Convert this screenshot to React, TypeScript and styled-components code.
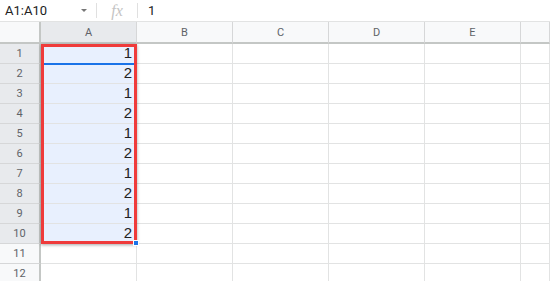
import styled, { createGlobalStyle } from "styled-components";

const GlobalStyle = createGlobalStyle`
  html, body {
    margin: 0;
    padding: 0;
    background: #ffffff;
    font-family: Roboto, "Liberation Sans", Arial, sans-serif;
    overflow: hidden;
  }
`;

//Formula bar along the top
const FormulaBar = styled.div`
  height: 21px;
  display: flex;
  align-items: center;
  border-bottom: 1px solid #e2e3e3;
  color: #222;
  font-size: 13px;
`;

const NameBox = styled.div`
  width: 96px;
  padding-left: 5px;
  box-sizing: border-box;
  display: flex;
  align-items: center;
  justify-content: space-between;
  padding-right: 9px;
`;

const Caret = styled.span`
  width: 0;
  height: 0;
  border-left: 3px solid transparent;
  border-right: 3px solid transparent;
  border-top: 3px solid #777;
`;

const Divider = styled.span`
  width: 1px;
  height: 15px;
  background: #e0e0e0;
`;

const Fx = styled.span`
  width: 40px;
  text-align: center;
  font-family: "Liberation Serif", serif;
  font-style: italic;
  font-size: 16px;
  color: #c4c4c4;
`;

const FormulaValue = styled.span`
  padding-left: 10px;
  color: #202124;
`;

//Grid of cells
const Sheet = styled.div`
  position: relative;
  display: grid;
  grid-template-columns: 41px repeat(5, 96px) 1fr;
  grid-template-rows: 22px;
  grid-auto-rows: 20px;
`;

const Corner = styled.div`
  background: #f8f9fa;
  border-right: 2px solid #c4c7c5;
  border-bottom: 2px solid #c4c7c5;
  box-sizing: border-box;
`;

const ColHead = styled.div<{ $active?: boolean }>`
  box-sizing: border-box;
  background: ${(p) => (p.$active ? "#e8eaed" : "#f8f9fa")};
  border-right: 1px solid #d6d7d8;
  border-bottom: 2px solid #c4c7c5;
  display: flex;
  align-items: center;
  justify-content: center;
  font-size: 11px;
  color: #5f6368;
`;

const RowHead = styled.div<{ $active?: boolean }>`
  box-sizing: border-box;
  background: ${(p) => (p.$active ? "#e8eaed" : "#f8f9fa")};
  border-right: 2px solid #c4c7c5;
  border-bottom: 1px solid #d6d7d8;
  display: flex;
  align-items: center;
  justify-content: center;
  font-size: 11px;
  color: #5f6368;
`;

const Cell = styled.div<{ $selected?: boolean }>`
  box-sizing: border-box;
  background: ${(p) => (p.$selected ? "#e8f0fe" : "#ffffff")};
  border-right: 1px solid #e2e3e3;
  border-bottom: 1px solid #e2e3e3;
  display: flex;
  align-items: flex-end;
  justify-content: flex-end;
  padding: 0 4px 1px 0;
  font-family: "Liberation Sans", Arial, sans-serif;
  font-size: 15px;
  line-height: 18px;
  color: #222;
`;

//Red annotation box drawn over column A
const Highlight = styled.div`
  position: absolute;
  left: 41px;
  top: 22px;
  width: 96px;
  height: 200px;
  box-sizing: border-box;
  border: 3px solid #ef3b3b;
  box-shadow: 0 1px 3px rgba(0, 0, 0, 0.35);
  pointer-events: none;
`;

const ActiveLine = styled.div`
  position: absolute;
  left: 44px;
  top: 41px;
  width: 90px;
  height: 2px;
  background: #1a73e8;
`;

const Handle = styled.div`
  position: absolute;
  left: 133px;
  top: 218px;
  width: 6px;
  height: 6px;
  background: #1a73e8;
  border: 1px solid #fff;
  box-sizing: border-box;
`;

const cols = ["A", "B", "C", "D", "E", ""];
const values = [1, 2, 1, 2, 1, 2, 1, 2, 1, 2];

const App = () => {
  return (
    <>
      <GlobalStyle />
      <FormulaBar>
        <NameBox>
          A1:A10
          <Caret />
        </NameBox>
        <Divider />
        <Fx>fx</Fx>
        <Divider />
        <FormulaValue>1</FormulaValue>
      </FormulaBar>
      <Sheet>
        <Corner />
        {cols.map((c, i) => (
          <ColHead key={i} $active={c === "A"}>
            {c}
          </ColHead>
        ))}
        {Array.from({ length: 12 }, (_, r) => (
          <>
            <RowHead key={"h" + r} $active={r < 10}>
              {r + 1}
            </RowHead>
            {cols.map((c, i) => (
              <Cell key={r + "-" + i} $selected={c === "A" && r < 10}>
                {c === "A" && r < 10 ? values[r] : ""}
              </Cell>
            ))}
          </>
        ))}
        <ActiveLine />
        <Highlight />
        <Handle />
      </Sheet>
    </>
  );
};

export default App;
